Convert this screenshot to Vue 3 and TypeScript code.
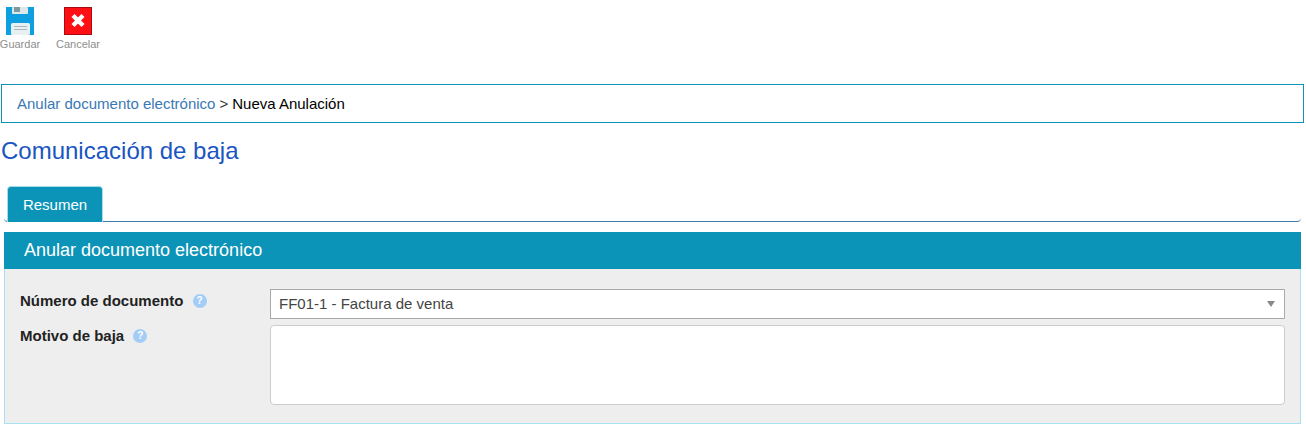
<script setup lang="ts">
const toolbar = [
  { id: 'save', label: 'Guardar' },
  { id: 'cancel', label: 'Cancelar' }
]
</script>

<template>
  <div class="page">
    <div class="toolbar">
      <div v-for="item in toolbar" :key="item.id" class="tool" :class="'tool-' + item.id">
        <svg v-if="item.id === 'save'" width="28" height="28" viewBox="0 0 28 28">
          <rect width="28" height="28" fill="#0d9fe0" />
          <rect x="6" y="0" width="16" height="7" rx="1" fill="#dfe8e8" />
          <rect x="8" y="0" width="6" height="5" fill="#7e9aa0" />
          <rect x="5" y="16" width="19" height="12" rx="1.5" fill="#e8f0f2" />
          <rect x="8" y="19" width="13" height="1" fill="#a9b8bc" />
          <rect x="8" y="22" width="13" height="1" fill="#a9b8bc" />
        </svg>
        <svg v-else width="28" height="28" viewBox="0 0 28 28">
          <rect x="0.5" y="0.5" width="27" height="27" fill="#fe0f14" stroke="#a80c10" />
          <path d="M9 8.5 L19 18.5 M19 8.5 L9 18.5" stroke="#fff" stroke-width="4.4" />
        </svg>
        <span class="tool-label">{{ item.label }}</span>
      </div>
    </div>

    <div class="breadcrumb">
      <a class="crumb-link">Anular documento electrónico</a>
      <span class="crumb-sep">&gt;</span>
      <span class="crumb-current">Nueva Anulación</span>
    </div>

    <h1 class="title">Comunicación de baja</h1>

    <div class="tabs">
      <div class="tab">Resumen</div>
    </div>

    <section class="panel">
      <h2 class="panel-head">Anular documento electrónico</h2>
      <div class="panel-body">
        <div class="row row-select">
          <label class="field-label">
            Número de documento
            <span class="help">?</span>
          </label>
          <div class="select">
            <span>FF01-1 - Factura de venta</span>
            <i class="caret"></i>
          </div>
        </div>
        <div class="row row-text">
          <label class="field-label">
            Motivo de baja
            <span class="help">?</span>
          </label>
          <div class="textarea"></div>
        </div>
      </div>
    </section>
  </div>
</template>

<style scoped>
.page {
  width: 1306px;
  height: 430px;
  overflow: hidden;
  box-sizing: border-box;
  padding-top: 7px;
  font-family: "Liberation Sans", Arial, sans-serif;
  background: #fff;
}

.toolbar {
  display: flex;
  height: 77px;
  padding-left: 6px;
  gap: 30px;
}

.tool {
  position: relative;
  width: 28px;
  height: 28px;
}

.tool svg {
  display: block;
}

.tool-label {
  position: absolute;
  top: 31px;
  left: 50%;
  transform: translateX(-50%);
  font-size: 11px;
  line-height: 12px;
  color: #8e8e8e;
  white-space: nowrap;
}

.breadcrumb {
  box-sizing: border-box;
  width: 1303px;
  height: 39px;
  margin-left: 1px;
  padding-left: 15px;
  border: 1px solid #0c94b8;
  display: flex;
  align-items: center;
  font-size: 15px;
  gap: 4px;
}

.crumb-link {
  color: #3a77b5;
}

.crumb-sep {
  color: #333;
}

.crumb-current {
  color: #000;
}

.title {
  margin: 15px 0 0 1px;
  font-size: 24px;
  line-height: 26px;
  font-weight: 400;
  color: #1a55c2;
}

.tabs {
  box-sizing: border-box;
  width: 1297px;
  height: 36px;
  margin: 22px 0 0 4px;
  padding-left: 3px;
  border-bottom: 1px solid #3f7cab;
  border-radius: 0 0 4px 4px;
}

.tab {
  box-sizing: border-box;
  width: 96px;
  height: 36px;
  border: 1px solid #a8dcec;
  border-bottom: none;
  border-radius: 4px 4px 0 0;
  background: #0c94b8;
  color: #fff;
  font-size: 15px;
  line-height: 35px;
  text-align: center;
}

.panel {
  width: 1297px;
  margin: 10px 0 0 4px;
}

.panel-head {
  height: 37px;
  margin: 0;
  padding-left: 20px;
  background: #0c94b8;
  color: #fff;
  font-size: 18px;
  font-weight: 400;
  line-height: 37px;
}

.panel-body {
  box-sizing: border-box;
  height: 155px;
  padding: 20px 15px 0;
  background: #eee;
  border: 1px solid #a8e2f0;
  border-top: none;
}

.row {
  display: flex;
}

.row-select {
  margin-bottom: 6px;
}

.field-label {
  width: 250px;
  flex: none;
  padding-top: 4px;
  font-size: 15px;
  line-height: 16px;
  font-weight: 700;
  color: #222;
}

.row-text .field-label {
  padding-top: 3px;
}

.help {
  display: inline-block;
  width: 14px;
  height: 14px;
  margin-left: 5px;
  border-radius: 50%;
  background: #a3cdf7;
  color: #fff;
  font-size: 10px;
  line-height: 14px;
  text-align: center;
  vertical-align: 2px;
}

.select {
  box-sizing: border-box;
  flex: 1;
  height: 30px;
  padding: 0 8px 2px;
  display: flex;
  align-items: center;
  justify-content: space-between;
  background: #fff;
  border: 1px solid #aaa;
  font-size: 15px;
  color: #444;
}

.caret {
  width: 0;
  height: 0;
  border-left: 4px solid transparent;
  border-right: 4px solid transparent;
  border-top: 6px solid #888;
  margin: 2px 1px 0 0;
}

.textarea {
  box-sizing: border-box;
  flex: 1;
  height: 80px;
  background: #fff;
  border: 1px solid #ccc;
  border-radius: 4px;
}
</style>
